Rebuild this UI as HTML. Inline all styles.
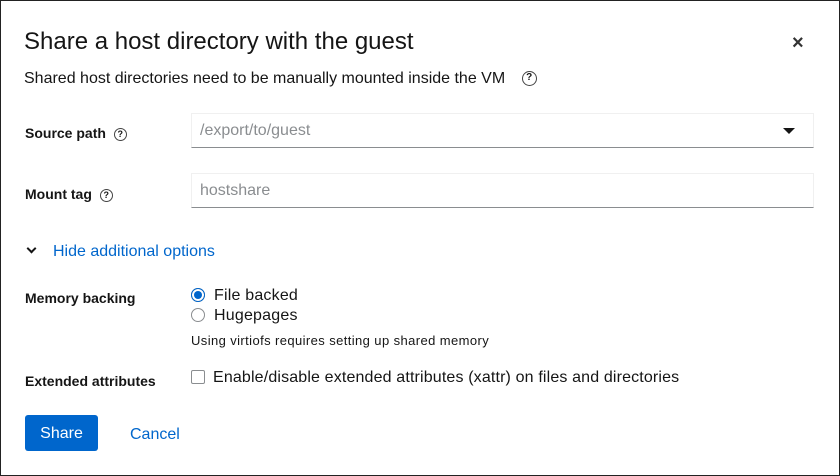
<!DOCTYPE html>
<html><head><style>
*{box-sizing:border-box;margin:0;padding:0}
body{width:840px;height:476px;background:#fff;font-family:"Liberation Sans",sans-serif;color:#151515;position:relative;overflow:hidden}
.frame{position:absolute;left:0;top:0;width:840px;height:476px;border:1px solid #222}
.a{position:absolute;white-space:nowrap}
.lbl{font-size:14px;font-weight:bold}
.q{display:inline-block;width:13px;height:13px;border:1.5px solid #444;border-radius:50%;font-size:9px;font-weight:bold;text-align:center;line-height:10px;vertical-align:middle}
.inp{position:absolute;left:191px;width:623px;height:35px;border:1px solid #f0f0f0;border-bottom:1px solid #8a8d90;font-size:16px;color:#8a8d90;padding:8px 8px}
</style></head><body>
<div class="frame"></div>
<div class="a" style="left:24px;top:28px;font-size:24px">Share a host directory with the guest</div>
<div class="a" style="left:792px;top:32px;font-size:20px;font-weight:bold;color:#333">×</div>
<div class="a" style="left:24px;top:70px;font-size:16px">Shared host directories need to be manually mounted inside the VM <span class="q" style="margin-left:12px;width:15px;height:15px;line-height:12px;font-size:10px">?</span></div>
<div class="a lbl" style="left:25px;top:125px">Source path <span class="q" style="margin-left:4px">?</span></div>
<div class="inp" style="top:113px">/export/to/guest<span style="position:absolute;right:18px;top:14px;border-left:6px solid transparent;border-right:6px solid transparent;border-top:6px solid #151515"></span></div>
<div class="a lbl" style="left:25px;top:186px">Mount tag <span class="q" style="margin-left:4px">?</span></div>
<div class="inp" style="top:173px">hostshare</div>
<div class="a" style="left:28px;top:243px;font-size:16px;color:#06c"><span style="display:inline-block;width:7px;height:7px;border-right:2px solid #151515;border-bottom:2px solid #151515;transform:rotate(45deg);margin-right:18px;vertical-align:4px"></span>Hide additional options</div>
<div class="a lbl" style="left:25px;top:290px">Memory backing</div>
<div class="a" style="left:191px;top:288px;width:14px;height:14px;border:1px solid #8a8d90;border-radius:50%"><div style="width:8px;height:8px;margin:2px;border-radius:50%;background:#06c"></div></div>
<div class="a" style="left:191px;top:288px;width:14px;height:14px;border:1.5px solid #06c;border-radius:50%"></div>
<div class="a" style="left:214px;top:287px;font-size:16px;letter-spacing:0.2px">File backed</div>
<div class="a" style="left:191px;top:308px;width:14px;height:14px;border:1.5px solid #8a8d90;border-radius:50%"></div>
<div class="a" style="left:214px;top:307px;font-size:16px;letter-spacing:0.2px">Hugepages</div>
<div class="a" style="left:191px;top:333px;font-size:13px;letter-spacing:0.4px">Using virtiofs requires setting up shared memory</div>
<div class="a lbl" style="left:25px;top:373px">Extended attributes</div>
<div class="a" style="left:191px;top:370px;width:14px;height:14px;border:1.5px solid #8a8d90;border-radius:2px"></div>
<div class="a" style="left:213px;top:369px;font-size:16px;letter-spacing:0.15px">Enable/disable extended attributes (xattr) on files and directories</div>
<div class="a" style="left:25px;top:415px;width:73px;height:36px;background:#06c;border-radius:3px;color:#fff;font-size:16px;text-align:center;line-height:38px">Share</div>
<div class="a" style="left:130px;top:426px;font-size:16px;color:#06c">Cancel</div>
</body></html>
